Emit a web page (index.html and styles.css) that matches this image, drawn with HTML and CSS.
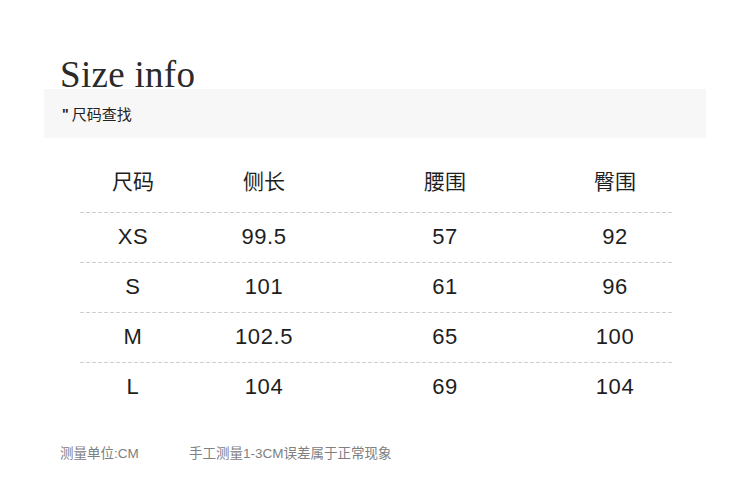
FILE: index.html
```html
<!DOCTYPE html>
<html lang="zh">
<head>
<meta charset="utf-8">
<title>Size info</title>
<link rel="stylesheet" href="styles.css">
</head>
<body>
<div class="page">
  <h1 class="title">Size info</h1>
  <div class="band"><span class="quote">"</span> 尺码查找</div>
  <div class="table">
    <div class="row head">
      <div class="c c1">尺码</div><div class="c c2">侧长</div><div class="c c3">腰围</div><div class="c c4">臀围</div>
    </div>
    <div class="row">
      <div class="c c1">XS</div><div class="c c2">99.5</div><div class="c c3">57</div><div class="c c4">92</div>
    </div>
    <div class="row">
      <div class="c c1">S</div><div class="c c2">101</div><div class="c c3">61</div><div class="c c4">96</div>
    </div>
    <div class="row">
      <div class="c c1">M</div><div class="c c2">102.5</div><div class="c c3">65</div><div class="c c4">100</div>
    </div>
    <div class="row">
      <div class="c c1">L</div><div class="c c2">104</div><div class="c c3">69</div><div class="c c4">104</div>
    </div>
  </div>
  <div class="foot">
    <span class="unit">测量单位:CM</span>
    <span class="note">手工测量1-3CM误差属于正常现象</span>
  </div>
</div>
</body>
</html>
```
FILE: styles.css
```css
html, body {
  margin: 0;
  padding: 0;
  background: #ffffff;
}
.page {
  width: 750px;
  height: 488px;
  padding-top: 61px;
  box-sizing: border-box;
  font-family: "Liberation Sans", "Noto Sans CJK SC", sans-serif;
  color: #1e1e1e;
}
.title {
  margin: 0 0 0 60px;
  font-family: "Liberation Serif", serif;
  font-weight: 400;
  font-size: 37px;
  line-height: 28px;
  letter-spacing: 0.3px;
  color: #2a2a2a;
}
.band {
  margin: 0 44px;
  height: 49px;
  background: #f7f7f7;
  display: flex;
  align-items: center;
  padding-left: 18px;
  font-family: "Noto Sans CJK SC", sans-serif;
  font-size: 15px;
  color: #222;
}
.quote {
  font-family: "Liberation Sans", sans-serif;
  font-weight: 700;
  font-size: 14px;
  margin-right: 3px;
}
.table {
  margin: 11px 0 0 80px;
  width: 592px;
}
.row {
  display: grid;
  grid-template-columns: 106px 156px 206px 124px;
  height: 50px;
  align-items: center;
  background: repeating-linear-gradient(to right, #cfcfcf 0 4px, transparent 4px 6px) top left / 100% 1px no-repeat;
  font-size: 22px;
  letter-spacing: 0.6px;
}
.row.head {
  height: 63px;
  padding-bottom: 2px;
  box-sizing: border-box;
  background: none;
  font-family: "Noto Sans CJK SC", sans-serif;
  font-size: 21px;
  letter-spacing: 0;
}
.c {
  text-align: center;
  line-height: 24px;
}
.c4 {
  padding-left: 10px;
}
.foot {
  margin: 32px 0 0 60px;
  display: flex;
  font-family: "Liberation Sans", "Noto Sans CJK SC", sans-serif;
  font-size: 13.5px;
  line-height: 20px;
  color: #808080;
}
.unit {
  width: 129px;
}
```
